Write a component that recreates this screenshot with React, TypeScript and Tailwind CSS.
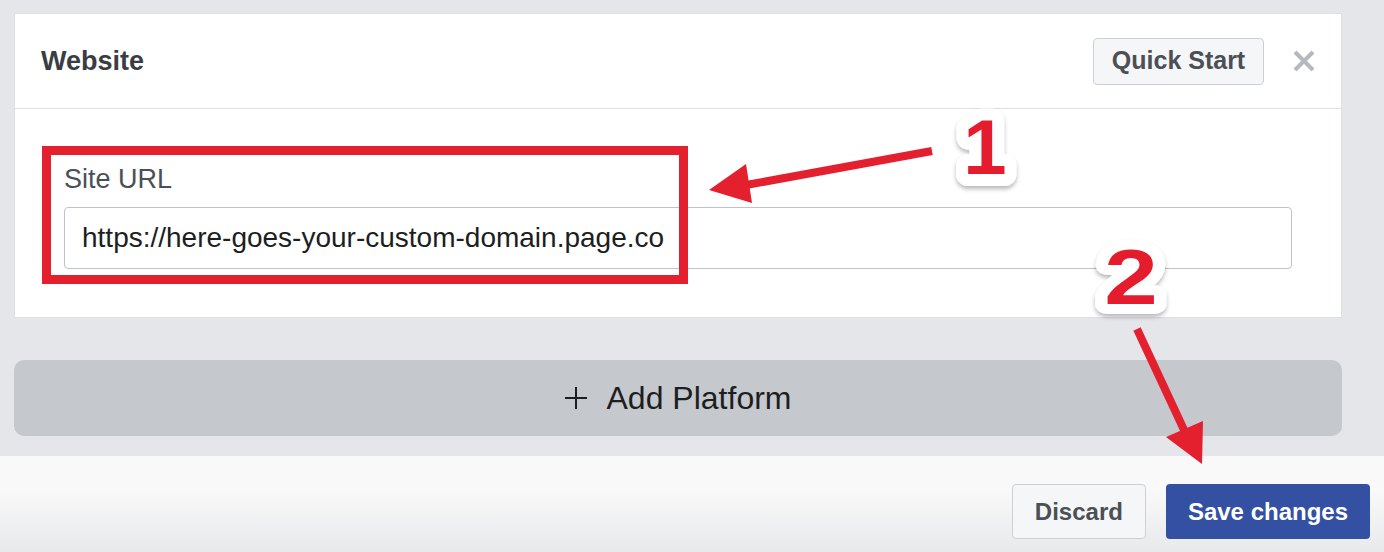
function CloseIcon() {
  return (
    <svg width="22" height="22" viewBox="0 0 22 22" className="block">
      <path d="M2 2L20 20M20 2L2 20" stroke="#b5b8bd" strokeWidth="4" strokeLinecap="butt" />
    </svg>
  );
}

function PlusIcon() {
  return (
    <svg width="22" height="22" viewBox="0 0 22 22" className="block">
      <path d="M11 0V22M0 11H22" stroke="#1c1e21" strokeWidth="2" />
    </svg>
  );
}

function Annotations() {
  return (
    <svg
      width="1384"
      height="552"
      viewBox="0 0 1384 552"
      className="absolute inset-0 pointer-events-none"
    >
      <defs>
        <filter id="shadow" x="-50%" y="-50%" width="200%" height="200%">
          <feDropShadow dx="0" dy="3" stdDeviation="2" floodColor="#000" floodOpacity="0.28" />
        </filter>
      </defs>

      {/* box round the field */}
      <rect x="46.5" y="150.5" width="637" height="129" fill="none" stroke="#e41f2e" strokeWidth="9" />

      {/* arrow 1 */}
      <line x1="932" y1="151" x2="746" y2="185" stroke="#e41f2e" strokeWidth="8" />
      <polygon points="709,190 746,164 752,203" fill="#e41f2e" />

      {/* arrow 2 */}
      <line x1="1137" y1="329" x2="1185" y2="432" stroke="#e41f2e" strokeWidth="8" />
      <polygon points="1202,464 1166,437 1203,421" fill="#e41f2e" />

      {/* step numbers */}
      <g filter="url(#shadow)" fontFamily="'Liberation Sans', Arial, sans-serif" fontWeight="700">
        <text
          x="985"
          y="174"
          fontSize="78"
          textAnchor="middle"
          fill="#e41f2e"
          stroke="#fff"
          strokeWidth="24"
          strokeLinejoin="round"
          paintOrder="stroke"
        >
          1
        </text>
        <text
          transform="translate(1131 304) scale(1.25 1)"
          fontSize="77"
          textAnchor="middle"
          fill="#e41f2e"
          stroke="#fff"
          strokeWidth="20"
          strokeLinejoin="round"
          paintOrder="stroke"
        >
          2
        </text>
      </g>
    </svg>
  );
}

export default function App() {
  return (
    <div className="relative w-[1384px] h-[552px] overflow-hidden bg-[#e4e6e9] font-['Liberation_Sans',Arial,sans-serif]">
      <div className="w-[1356px] px-[14px] pt-[13px] pb-[20px]">
        {/* Website card */}
        <div className="border border-[#dddfe2] bg-white">
          <div className="flex h-[95px] items-center border-b border-[#dddfe2] pl-[26px] pr-[26px]">
            <h2 className="flex-1 text-[27px] font-bold text-[#3a3d43]">Website</h2>
            <button className="h-[47px] w-[171px] rounded-[4px] border border-[#ccd0d5] bg-[#f5f6f7] text-[25px] font-bold text-[#4b4f56]">
              Quick Start
            </button>
            <div className="ml-[29px]">
              <CloseIcon />
            </div>
          </div>

          <div className="px-[49px] pt-[54px] pb-[48px]">
            <label className="block h-[32px] text-[27px] leading-[32px] text-[#4b4f56]">Site URL</label>
            <div className="mt-[12px] flex h-[62px] items-center rounded-[4px] border border-[#bec3c9] pl-[17px]">
              <span className="text-[28px] leading-[32px] text-[#1c1e21]">
                https://here-goes-your-custom-domain.page.co
              </span>
            </div>
          </div>
        </div>

        {/* Add Platform */}
        <div className="mt-[42px] flex h-[76px] items-center justify-center gap-[20px] rounded-[10px] bg-[#c5c8cc] text-[#1c1e21]">
          <PlusIcon />
          <span className="text-[32px]">Add Platform</span>
        </div>
      </div>

      {/* Footer */}
      <div className="flex h-[96px] items-start justify-end gap-[20px] bg-[linear-gradient(to_bottom,#f9f9f9_0%,#f9f9f9_35%,#e8e9eb_100%)] pt-[28px] pr-[14px]">
        <button className="h-[55px] rounded-[4px] border border-[#ccd0d5] bg-[#f5f6f7] px-[22px] text-[24px] font-bold text-[#4b4f56]">
          Discard
        </button>
        <button className="h-[55px] rounded-[4px] bg-[#3350a3] px-[22px] text-[24px] font-bold text-white">
          Save changes
        </button>
      </div>

      <Annotations />
    </div>
  );
}
